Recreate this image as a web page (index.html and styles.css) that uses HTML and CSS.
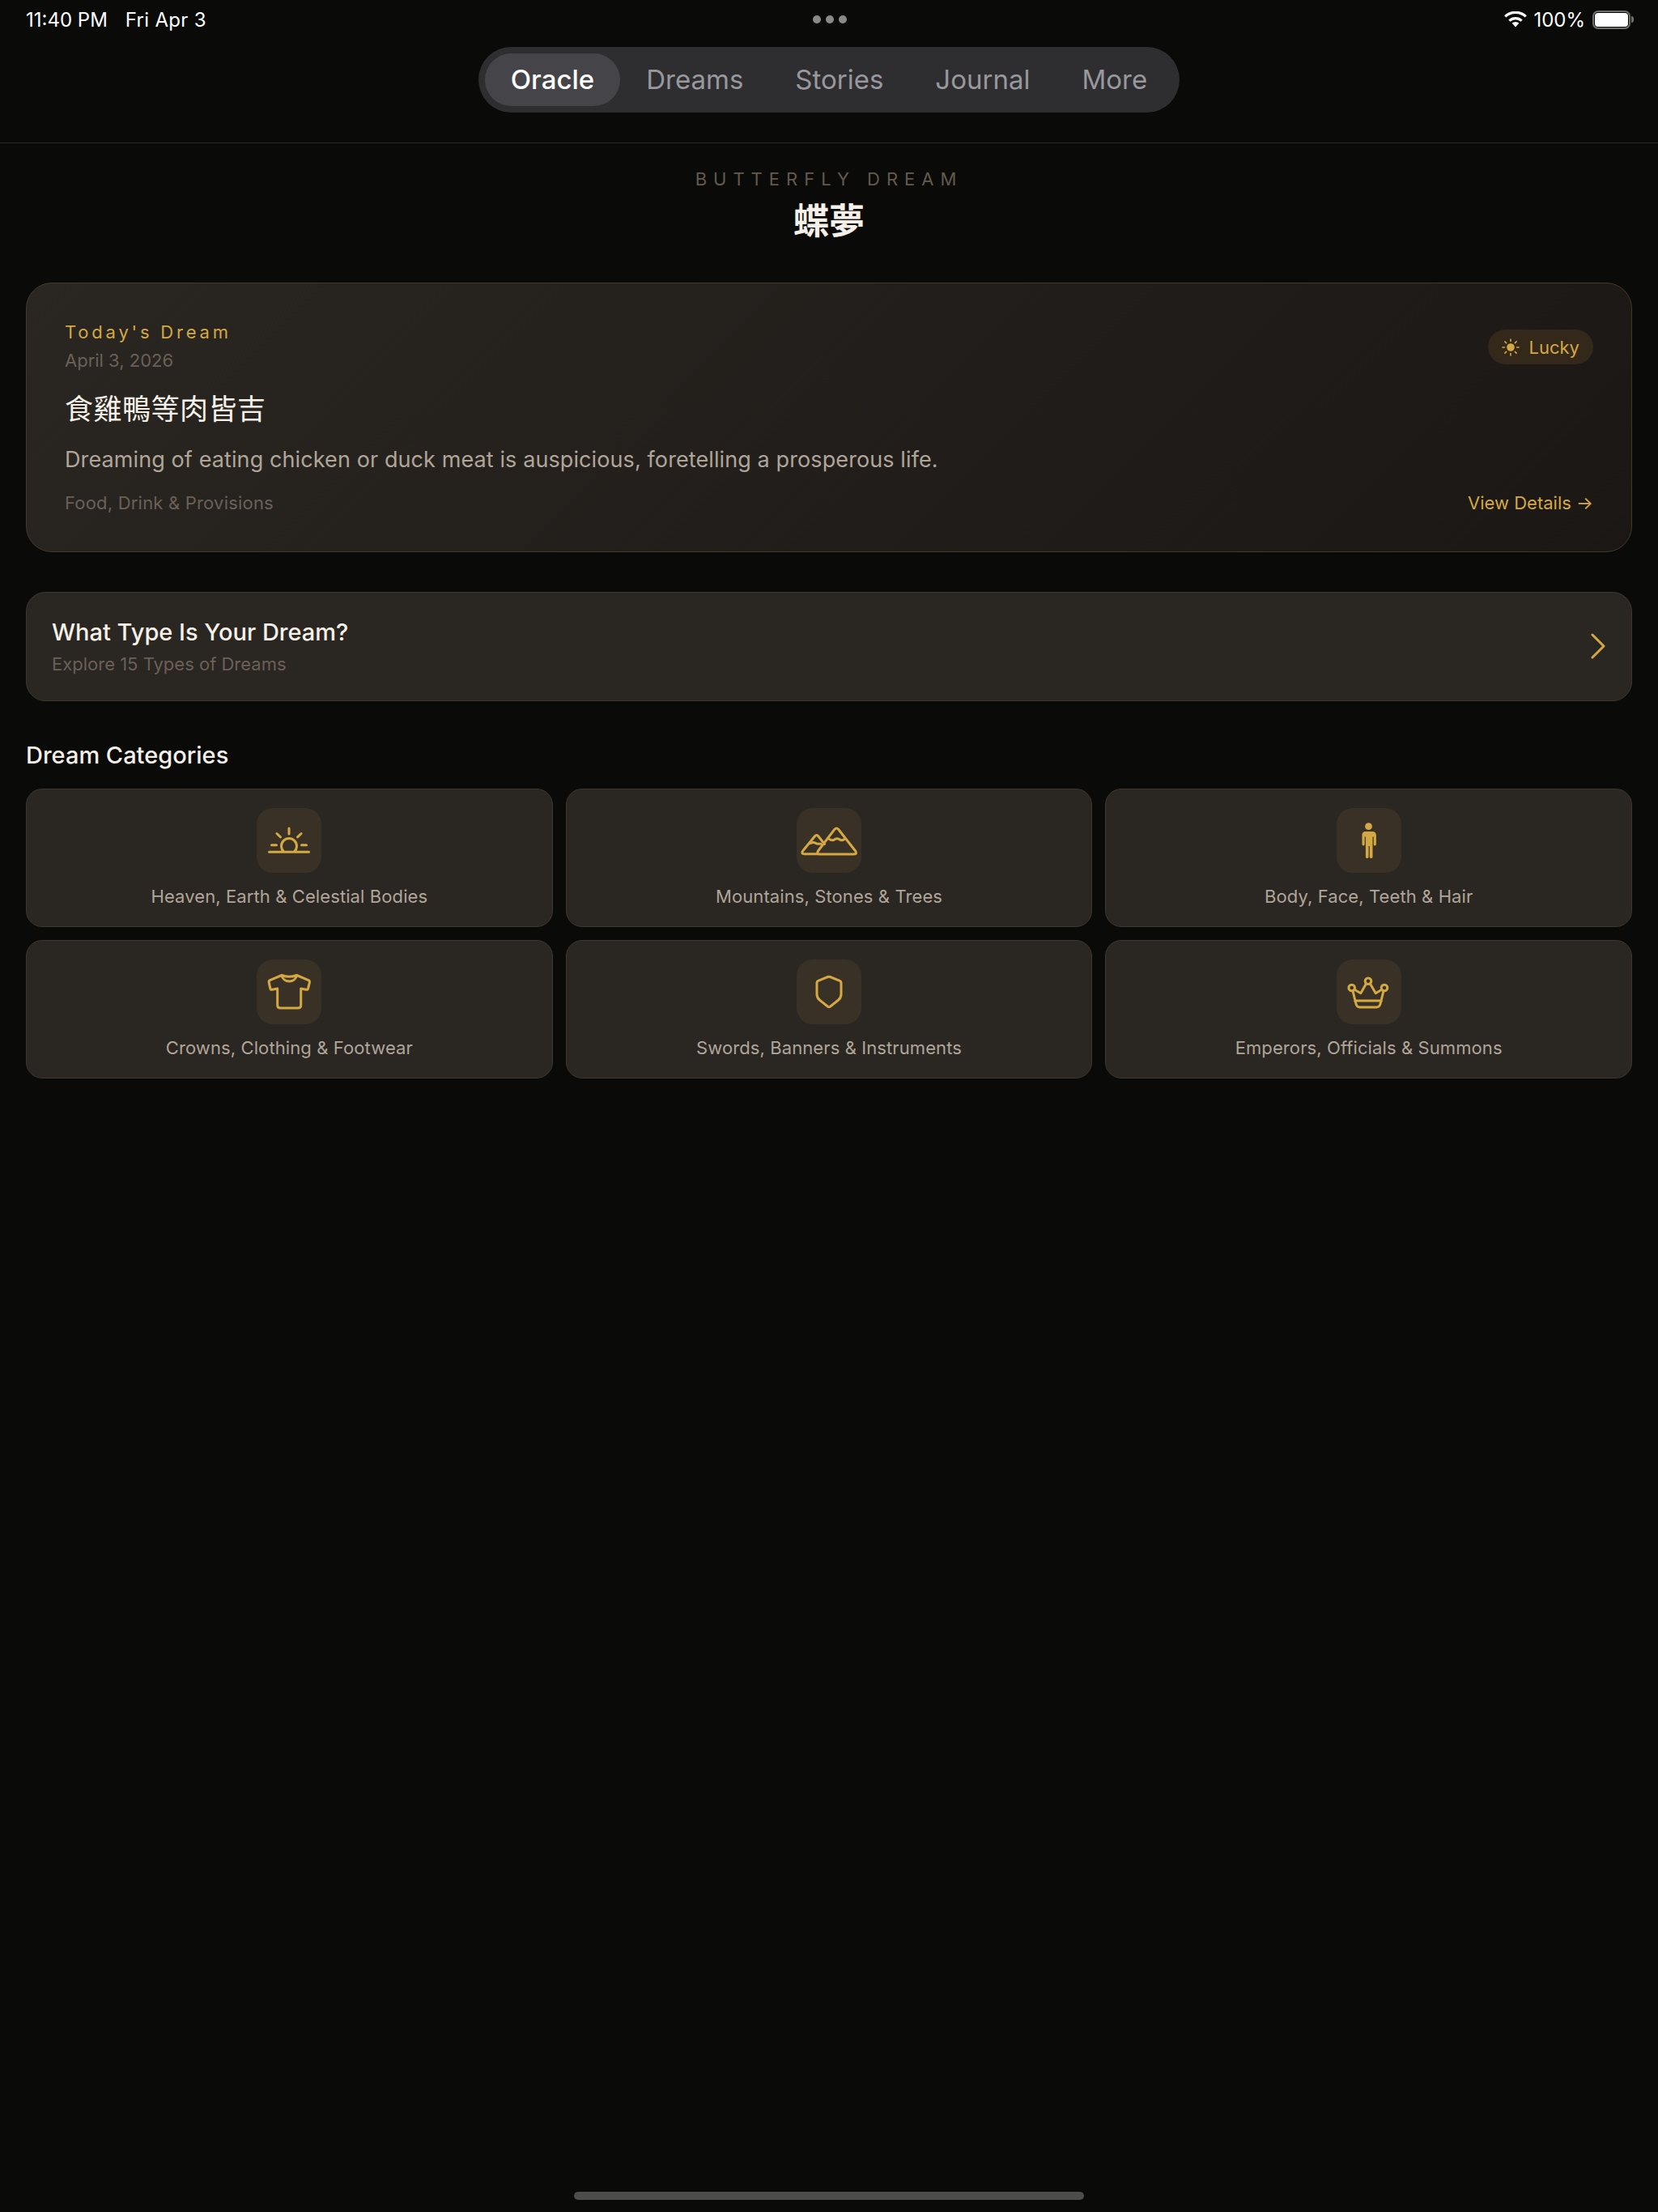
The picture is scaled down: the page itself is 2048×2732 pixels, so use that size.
FILE: index.html
```html
<!DOCTYPE html>
<html lang="en">

<head>
    <meta charset="UTF-8">
    <meta name="viewport" content="width=device-width,initial-scale=1" />
    <title>Butterfly Dream</title>
    <link rel="stylesheet" href="styles.css">
</head>

<body>
    <div class="status-bar">
        <div class="status-left">
            <span>11:40 PM</span>
            <span class="status-date">Fri Apr 3</span>
        </div>
        <div class="status-dots"><i></i><i></i><i></i></div>
        <div class="status-right">
            <svg class="wifi" width="28" height="20" viewBox="0 0 28 20">
                <path d="M14 19.5 9.6 14.6a6.6 6.6 0 0 1 8.8 0Z" fill="#fff" />
                <path d="M6.4 11.6a11 11 0 0 1 15.2 0" fill="none" stroke="#fff" stroke-width="3.2" />
                <path d="M1.2 6.4a18.6 18.6 0 0 1 25.6 0" fill="none" stroke="#fff" stroke-width="3.2" />
            </svg>
            <span>100%</span>
            <div class="battery"><div class="battery-fill"></div></div>
            <div class="battery-tip"></div>
        </div>
    </div>

    <header class="top-nav">
        <nav class="tabs">
            <a class="tab tab-active">Oracle</a>
            <a class="tab">Dreams</a>
            <a class="tab">Stories</a>
            <a class="tab">Journal</a>
            <a class="tab">More</a>
        </nav>
    </header>

    <section class="brand">
        <div class="brand-en">BUTTERFLY DREAM</div>
        <h1 class="brand-zh" lang="zh-TW">蝶夢</h1>
    </section>

    <main class="content">
        <section class="today-card">
            <div class="today-head">
                <div>
                    <div class="today-label">Today's Dream</div>
                    <div class="today-date">April 3, 2026</div>
                </div>
                <div class="lucky">
                    <svg width="22" height="22" viewBox="0 0 22 22" fill="none" stroke="#d4a843" stroke-width="1.6" stroke-linecap="round">
                        <circle cx="11" cy="11" r="4.8" fill="#d4a843" stroke="none" />
                        <path d="M11 1v2.4M11 18.6V21M1 11h2.4M18.6 11H21M3.9 3.9l1.7 1.7M16.4 16.4l1.7 1.7M3.9 18.1l1.7-1.7M16.4 5.6l1.7-1.7" />
                    </svg>
                    <span>Lucky</span>
                </div>
            </div>
            <h2 class="today-title" lang="zh-TW">食雞鴨等肉皆吉</h2>
            <p class="today-desc">Dreaming of eating chicken or duck meat is auspicious, foretelling a prosperous life.</p>
            <div class="today-foot">
                <span class="today-cat">Food, Drink &amp; Provisions</span>
                <span class="today-link">View Details →</span>
            </div>
        </section>

        <section class="type-card">
            <div>
                <div class="type-title">What Type Is Your Dream?</div>
                <div class="type-sub">Explore 15 Types of Dreams</div>
            </div>
            <svg width="20" height="32" viewBox="0 0 20 32" fill="none" stroke="#d4a843" stroke-width="3" stroke-linecap="round" stroke-linejoin="round">
                <path d="M3 2l14 14L3 30" />
            </svg>
        </section>

        <h3 class="section-title">Dream Categories</h3>

        <section class="cat-grid">
            <div class="cat-card">
                <div class="cat-icon">
                    <svg width="80" height="80" viewBox="0 0 80 80">
                        <path d="M15.5 54.3h49M33.6 54A9.5 9.5 0 1 1 46.4 54M40 25v7M24.9 31.5l4.6 4.3M55.1 31.5l-4.6 4.3M18.5 45.7h6M55.5 45.7h6" />
                    </svg>
                </div>
                <div class="cat-name">Heaven, Earth &amp; Celestial Bodies</div>
            </div>
            <div class="cat-card">
                <div class="cat-icon">
                    <svg width="80" height="80" viewBox="0 0 80 80">
                        <path d="M34.5 44.5 27 35Q24.7 32 22.3 35L7.6 53Q5.5 56.6 9.5 56.8H26" />
                        <path d="M47 26.2Q49.3 23.6 51.6 26.2L72.6 53Q75 57 71 57H28.4Q24.5 57 26.5 53Z" />
                        <path d="M40.2 38.3Q44 41 47 38.8T53 38.8 59 38.3M17.2 43.5Q20.5 41.8 23.5 43.3T30 44.2" />
                    </svg>
                </div>
                <div class="cat-name">Mountains, Stones &amp; Trees</div>
            </div>
            <div class="cat-card">
                <div class="cat-icon">
                    <svg width="80" height="80" viewBox="0 0 80 80">
                        <circle cx="39.5" cy="22.7" r="4.4" fill="#d4a843" stroke="none" />
                        <path fill="#d4a843" stroke="none" d="M34.5 29h10a4.5 4.5 0 0 1 4.4 4.5v11.3a1.6 1.6 0 0 1-3.2 0V35.5h-1.2V60.2a1.8 1.8 0 0 1-3.7 0V47h-1.2V60.2a1.8 1.8 0 0 1-3.7 0V35.5h-1.2v9.3a1.6 1.6 0 0 1-3.2 0V33.5A4.5 4.5 0 0 1 34.5 29Z" />
                    </svg>
                </div>
                <div class="cat-name">Body, Face, Teeth &amp; Hair</div>
            </div>
            <div class="cat-card">
                <div class="cat-icon">
                    <svg width="80" height="80" viewBox="0 0 80 80">
                        <path d="M31 19.5 16.5 25.6Q14.8 26.4 15.2 28.4L16.8 35.6Q17.2 37.6 19.2 37.3L25.7 36V56.5Q25.7 60 29.2 60H51.2Q54.7 60 54.7 56.5V36L61.2 37.3Q63.2 37.6 63.6 35.6L65.4 28.4Q65.8 26.4 64 25.6L49.5 19.5" />
                        <path d="M31 19.5C32.5 29.5 48 29.5 49.5 19.5Q40.2 23 31 19.5Z" />
                    </svg>
                </div>
                <div class="cat-name">Crowns, Clothing &amp; Footwear</div>
            </div>
            <div class="cat-card">
                <div class="cat-icon">
                    <svg width="80" height="80" viewBox="0 0 80 80">
                        <path d="M38.8 21.5 26.6 26.3Q25 27 25 28.7V43Q25 47.5 28.6 50.3L38.6 58.2Q40 59.2 41.4 58.2L51.4 50.3Q55 47.5 55 43V28.7Q55 27 53.4 26.3L41.2 21.5Q40 21 38.8 21.5Z" />
                    </svg>
                </div>
                <div class="cat-name">Swords, Banners &amp; Instruments</div>
            </div>
            <div class="cat-card">
                <div class="cat-icon">
                    <svg width="80" height="80" viewBox="0 0 80 80">
                        <circle cx="39" cy="26.7" r="3.8" />
                        <circle cx="18.7" cy="35" r="3.8" />
                        <circle cx="59" cy="35" r="3.8" />
                        <path d="M36.5 30 29.8 41.7 22.5 37.5M41.5 30 48.3 41.7 55.3 37.5M20 38.8 24 55Q25 59 28.5 59H49.5Q53 59 54 55L58 38.8M22.5 51H55.5" />
                    </svg>
                </div>
                <div class="cat-name">Emperors, Officials &amp; Summons</div>
            </div>
        </section>
    </main>

    <div class="home-bar"></div>
</body>

</html>
```

FILE: styles.css
```css
* {
    box-sizing: border-box;
}

html,
body {
    margin: 0;
    padding: 0;
}

body {
    height: 2732px;
    display: flex;
    flex-direction: column;
    background: #0a0a08;
    color: #f5f0e8;
    font-family: "Inter", "Noto Sans CJK TC", sans-serif;
}

/* status bar */
.status-bar {
    height: 48px;
    padding: 0 30px 0 32px;
    display: grid;
    grid-template-columns: 1fr auto 1fr;
    align-items: center;
    color: #fff;
    font-size: 24px;
}

.status-left {
    display: flex;
    gap: 22px;
}

.status-date {
    letter-spacing: 0.3px;
}

.status-dots {
    display: flex;
    gap: 6px;
}

.status-dots i {
    width: 10px;
    height: 10px;
    border-radius: 50%;
    background: #8a8a86;
}

.status-right {
    display: flex;
    align-items: center;
    justify-content: flex-end;
}

.wifi {
    margin-right: 8px;
}

.battery {
    width: 47px;
    height: 23px;
    margin-left: 9px;
    padding: 1px;
    border: 2px solid #6f6f6d;
    border-radius: 7px;
}

.battery-fill {
    height: 100%;
    background: #fff;
    border-radius: 4px;
}

.battery-tip {
    width: 3px;
    height: 8px;
    margin-left: 1px;
    background: #6f6f6d;
    border-radius: 0 3px 3px 0;
}

/* tabs */
.top-nav {
    height: 129px;
    padding-top: 10px;
    display: flex;
    justify-content: center;
    align-items: flex-start;
    border-bottom: 1px solid #2a2a28;
}

.tabs {
    display: flex;
    height: 81px;
    padding: 8px;
    background: #2e2e31;
    border-radius: 41px;
}

.tab {
    height: 65px;
    line-height: 65px;
    padding: 0 32px;
    border-radius: 33px;
    font-size: 33px;
    color: #98989d;
}

.tab-active {
    background: #454549;
    color: #fff;
    font-weight: 550;
}

/* brand */
.brand {
    padding-top: 31px;
    text-align: center;
}

.brand-en {
    font-size: 22px;
    line-height: 26px;
    letter-spacing: 8px;
    color: #635a4e;
}

.brand-zh {
    margin: 8px 0 0;
    font-size: 44px;
    line-height: 62px;
    font-weight: 700;
    color: #f5f0e8;
}

/* content */
.content {
    padding: 45px 32px 0;
}

.today-card {
    height: 333px;
    padding: 46px 47px 0;
    border: 1px solid #453a28;
    border-radius: 32px;
    background: linear-gradient(135deg, #2a2622, #1a1714);
}

.today-head {
    display: flex;
    justify-content: space-between;
    align-items: flex-start;
}

.today-label {
    font-size: 22px;
    line-height: 28px;
    letter-spacing: 3.8px;
    color: #d4a843;
}

.today-date {
    margin-top: 7px;
    font-size: 22px;
    line-height: 28px;
    color: #6b6055;
}

.lucky {
    height: 43px;
    margin-top: 11px;
    padding: 0 17px;
    display: flex;
    align-items: center;
    gap: 12px;
    border-radius: 22px;
    background: #332819;
    color: #d4a843;
    font-size: 22px;
}

.today-title {
    margin: 21px 0 0;
    font-size: 35px;
    line-height: 50px;
    letter-spacing: 0.5px;
    font-weight: 400;
    color: #f5f0e8;
}

.today-desc {
    margin: 18px 0 0;
    font-size: 27px;
    line-height: 40px;
    letter-spacing: 0.1px;
    color: #b0a598;
}

.today-foot {
    margin-top: 19px;
    display: flex;
    justify-content: space-between;
    font-size: 22px;
    line-height: 28px;
}

.today-cat {
    letter-spacing: 0.2px;
    color: #6b6055;
}

.today-link {
    color: #d4a843;
}

.type-card {
    height: 135px;
    margin-top: 49px;
    padding: 0 31px 2px 31px;
    display: flex;
    justify-content: space-between;
    align-items: center;
    border: 1px solid #3f372e;
    border-radius: 24px;
    background: #2a2622;
}

.type-title {
    font-size: 29px;
    line-height: 38px;
    font-weight: 500;
}

.type-sub {
    margin-top: 6px;
    font-size: 22px;
    line-height: 28px;
    color: #6b6055;
}

.section-title {
    margin: 48px 0 22px;
    font-size: 29px;
    line-height: 38px;
    font-weight: 500;
}

.cat-grid {
    display: grid;
    grid-template-columns: repeat(3, 1fr);
    gap: 16px;
}

.cat-card {
    height: 171px;
    padding-top: 23px;
    display: flex;
    flex-direction: column;
    align-items: center;
    border: 1px solid #3f372e;
    border-radius: 20px;
    background: #2a2622;
}

.cat-icon {
    width: 80px;
    height: 80px;
    border-radius: 20px;
    background: #3a3126;
}

.cat-icon svg {
    display: block;
    fill: none;
    stroke: #d4a843;
    stroke-width: 3;
    stroke-linecap: round;
    stroke-linejoin: round;
}

.cat-name {
    margin-top: 15px;
    font-size: 22px;
    line-height: 28px;
    letter-spacing: 0.1px;
    color: #b0a598;
}

.home-bar {
    width: 630px;
    height: 10px;
    margin: auto auto 15px;
    border-radius: 5px;
    background: #4d4d4d;
}
```
